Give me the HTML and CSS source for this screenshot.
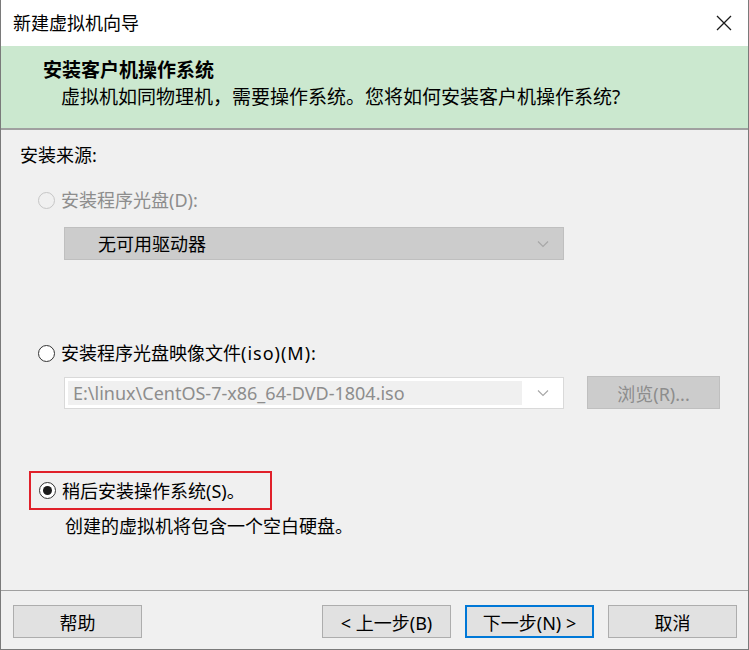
FILE: index.html
```html
<!DOCTYPE html>
<html lang="zh-CN">
<head>
    <meta charset="UTF-8">
    <meta name="viewport" content="width=device-width, initial-scale=1.0">
    <title>新建虚拟机向导</title>
    <link rel="stylesheet" href="styles.css">
</head>
<body>
    <div class="window">
        <div class="titlebar">
            <span class="title">新建虚拟机向导</span>
            <svg class="close" width="16" height="16" viewBox="0 0 16 16">
                <path d="M1 1 L15 15 M15 1 L1 15" stroke="#1a1a1a" stroke-width="1.3" fill="none"/>
            </svg>
        </div>

        <div class="header">
            <div class="header-title">安装客户机操作系统</div>
            <div class="header-sub">虚拟机如同物理机，需要操作系统。您将如何安装客户机操作系统?</div>
        </div>

        <div class="main">
            <div class="source-label">安装来源:</div>

            <div class="option option-disc disabled">
                <span class="radio"></span>
                <span>安装程序光盘(D):</span>
            </div>
            <div class="select-box disabled-select">
                <span class="select-text">无可用驱动器</span>
                <svg class="chevron" width="12" height="8" viewBox="0 0 12 8">
                    <path d="M1 1.5 L6 6.5 L11 1.5" stroke="#a6a6a6" stroke-width="1.1" fill="none"/>
                </svg>
            </div>

            <div class="option option-iso">
                <span class="radio"></span>
                <span>安装程序光盘映像文件<span class="latin">(iso)(M):</span></span>
            </div>
            <div class="iso-row">
                <div class="select-box iso-select">
                    <span class="iso-text">E:\linux\CentOS-7-x86_64-DVD-1804.iso</span>
                    <svg class="chevron" width="12" height="8" viewBox="0 0 12 8">
                        <path d="M1 1.5 L6 6.5 L11 1.5" stroke="#a6a6a6" stroke-width="1.1" fill="none"/>
                    </svg>
                </div>
                <div class="browse">浏览(R)...</div>
            </div>

            <div class="option option-later">
                <span class="radio checked"></span>
                <span>稍后安装操作系统(S)。</span>
            </div>
            <div class="note">创建的虚拟机将包含一个空白硬盘。</div>
        </div>

        <div class="footer">
            <button class="btn">帮助</button>
            <div class="spacer"></div>
            <button class="btn">&lt; 上一步(B)</button>
            <button class="btn btn-default">下一步(N) &gt;</button>
            <button class="btn">取消</button>
        </div>
    </div>
</body>
</html>
```

FILE: styles.css
```css
body {
    margin: 0;
    font-family: "Noto Sans", "Noto Sans CJK SC", sans-serif;
    font-size: 18px;
    color: #000;
    background: #f0f0f0;
}
.window {
    width: 749px;
    height: 650px;
    box-sizing: border-box;
    border: 1px solid #7a7a7a;
    border-top: none;
    display: flex;
    flex-direction: column;
    background: #f0f0f0;
}
.titlebar {
    height: 46px;
    background: #fff;
    display: flex;
    align-items: center;
    justify-content: space-between;
    padding: 0 16px 0 12px;
}
.title {
    line-height: 24px;
}
.close {
    display: block;
}
.header {
    height: 84px;
    box-sizing: border-box;
    background: #cbe8cf;
    border-bottom: 2px solid #a0a0a0;
    padding: 12px 0 0 42px;
    font-size: 19px;
}
.header-title {
    font-weight: bold;
    line-height: 24px;
}
.header-sub {
    line-height: 24px;
    margin-top: 3px;
    padding-left: 18px;
}
.main {
    flex: 1;
    padding: 13px 0 0 19px;
}
.source-label {
    line-height: 24px;
}
.option {
    display: flex;
    align-items: center;
    gap: 6px;
    line-height: 24px;
}
.option-disc {
    margin-top: 21px;
    padding-left: 18px;
}
.option-iso {
    margin-top: 81px;
    padding-left: 18px;
}
.latin {
    letter-spacing: 1px;
}
.disabled {
    color: #8d8d8d;
}
.radio {
    width: 17px;
    height: 17px;
    box-sizing: border-box;
    border: 1px solid #333;
    border-radius: 50%;
    background: #fff;
    position: relative;
}
.disabled .radio {
    border-color: #c6c6c6;
    background: #f0f0f0;
}
.radio.checked::after {
    content: "";
    position: absolute;
    left: 3px;
    top: 3px;
    width: 9px;
    height: 9px;
    border-radius: 50%;
    background: #1a1a1a;
}
.select-box {
    width: 500px;
    box-sizing: border-box;
    display: flex;
    align-items: center;
    margin-left: 44px;
}
.disabled-select {
    height: 33px;
    margin-top: 15px;
    background: #cccccc;
    border: 1px solid #bfbfbf;
    padding: 0 14px 0 33px;
}
.select-text {
    flex: 1;
    line-height: 24px;
}
.chevron {
    display: block;
}
.iso-row {
    display: flex;
    align-items: center;
    margin-top: 11px;
}
.iso-select {
    height: 32px;
    background: #fff;
    border: 1px solid #d9d9d9;
    padding: 3px 14px 3px 3px;
}
.iso-text {
    flex: 1;
    align-self: stretch;
    background: #f0f0f0;
    color: #8d8d8d;
    font-size: 18px;
    line-height: 24px;
    padding-left: 5px;
    margin-right: 15px;
}
.browse {
    width: 133px;
    height: 33px;
    box-sizing: border-box;
    margin-left: 23px;
    background: #cccccc;
    border: 1px solid #bfbfbf;
    color: #8d8d8d;
    display: flex;
    align-items: center;
    justify-content: center;
}
.option-later {
    width: 243px;
    height: 39px;
    box-sizing: border-box;
    margin: 62px 0 0 9px;
    padding-left: 8px;
    border: 2px solid #e0202a;
}
.note {
    margin: 4px 0 0 45px;
    line-height: 24px;
}
.footer {
    display: flex;
    gap: 14px;
    border-top: 1px solid #a0a0a0;
    padding: 14px 11px 11px 12px;
}
.spacer {
    flex: 1;
}
.btn {
    width: 129px;
    height: 33px;
    box-sizing: border-box;
    background: #e1e1e1;
    border: 1px solid #adadad;
    font-family: inherit;
    font-size: 18px;
    color: #000;
    padding: 0;
}
.btn-default {
    border: 2px solid #0078d7;
}
```
